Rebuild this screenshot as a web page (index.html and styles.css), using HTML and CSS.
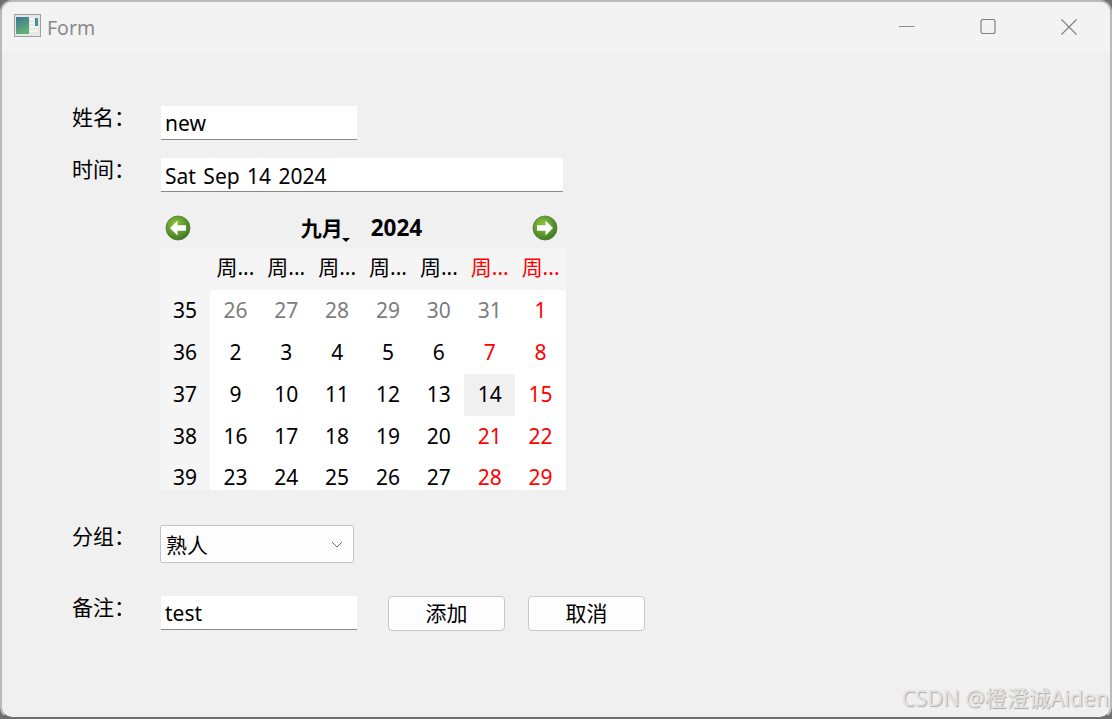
FILE: index.html
```html
<!DOCTYPE html>
<html lang="zh">
<head>
<meta charset="utf-8">
<title>Form</title>
<link rel="stylesheet" href="styles.css">
</head>
<body>
<div class="window">
  <header class="titlebar">
    <div class="title-left">
      <svg class="app-icon" width="27" height="23" viewBox="0 0 27 23">
        <defs><linearGradient id="pane" x1="0" y1="0" x2="0.4" y2="1"><stop offset="0" stop-color="#3a7596"/><stop offset="1" stop-color="#62b071"/></linearGradient></defs>
        <rect x="0.5" y="0.5" width="26" height="22" fill="#e6e8e8" stroke="#9aa0a4"/>
        <rect x="2" y="3" width="13" height="17" fill="url(#pane)"/>
        <rect x="21" y="4" width="3" height="8" fill="#478f94"/>
        <path d="M16 5h4M16 9h4M16 13h8M16 17h8" stroke="#f6f6f6" stroke-width="2"/>
      </svg>
      <span class="title-text">Form</span>
    </div>
    <div class="controls">
      <svg class="ctl" width="16" height="16" viewBox="0 0 16 16"><path d="M0 7.5h15.5" stroke="#8f8f8f" fill="none"/></svg>
      <svg class="ctl" width="16" height="16" viewBox="0 0 16 16"><rect x="1" y="0.5" width="14" height="14" rx="2" stroke="#7f7f7f" stroke-width="1.2" fill="none"/></svg>
      <svg class="ctl" width="16" height="16" viewBox="0 0 16 16"><path d="M0.5 0.5l15 15M15.5 0.5l-15 15" stroke="#808080" stroke-width="1.1" fill="none"/></svg>
    </div>
  </header>

  <main class="content">
    <div class="row row-name">
      <label class="label">姓名：</label>
      <div class="input input-short">new</div>
    </div>
    <div class="row row-time">
      <label class="label">时间：</label>
      <div class="input input-long">Sat Sep 14 2024</div>
    </div>

    <section class="calendar">
      <div class="cal-nav">
        <svg class="nav-icon" width="26" height="26" viewBox="0 0 26 26">
          <defs><radialGradient id="ball" cx="0.4" cy="0.35" r="0.75"><stop offset="0" stop-color="#8cc63f"/><stop offset="1" stop-color="#37701c"/></radialGradient></defs>
          <circle cx="13" cy="13" r="12" fill="url(#ball)" stroke="#54793f" stroke-width="0.8"/>
          <path d="M12.5 5.5L5 13l7.5 7.5v-4.7H21v-5.6h-8.5z" fill="#fff"/>
        </svg>
        <div class="cal-title"><span class="month">九月<i class="caret"></i></span><span class="year">2024</span></div>
        <svg class="nav-icon" width="26" height="26" viewBox="0 0 26 26">
          <circle cx="13" cy="13" r="12" fill="url(#ball)" stroke="#54793f" stroke-width="0.8"/>
          <path d="M13.5 5.5L21 13l-7.5 7.5v-4.7H5v-5.6h8.5z" fill="#fff"/>
        </svg>
      </div>
      <div class="cal-grid">
        <div class="hd"></div><div class="hd">周...</div><div class="hd">周...</div><div class="hd">周...</div><div class="hd">周...</div><div class="hd">周...</div><div class="hd red">周...</div><div class="hd red">周...</div>
        <div class="wk">35</div><div class="d mute">26</div><div class="d mute">27</div><div class="d mute">28</div><div class="d mute">29</div><div class="d mute">30</div><div class="d mute">31</div><div class="d red">1</div>
        <div class="wk">36</div><div class="d">2</div><div class="d">3</div><div class="d">4</div><div class="d">5</div><div class="d">6</div><div class="d red">7</div><div class="d red">8</div>
        <div class="wk">37</div><div class="d">9</div><div class="d">10</div><div class="d">11</div><div class="d">12</div><div class="d">13</div><div class="d sel">14</div><div class="d red">15</div>
        <div class="wk">38</div><div class="d">16</div><div class="d">17</div><div class="d">18</div><div class="d">19</div><div class="d">20</div><div class="d red">21</div><div class="d red">22</div>
        <div class="wk last">39</div><div class="d last">23</div><div class="d last">24</div><div class="d last">25</div><div class="d last">26</div><div class="d last">27</div><div class="d red last">28</div><div class="d red last">29</div>
      </div>
    </section>

    <div class="row row-group">
      <label class="label">分组：</label>
      <div class="combo">
        <span>熟人</span>
        <svg width="12" height="7" viewBox="0 0 12 7"><path d="M1 1l5 5 5-5" stroke="#6a6a6a" fill="none"/></svg>
      </div>
    </div>

    <div class="row row-note">
      <label class="label">备注：</label>
      <div class="input input-short">test</div>
      <button class="btn btn-add">添加</button>
      <button class="btn btn-cancel">取消</button>
    </div>
  </main>
  <div class="watermark">CSDN @橙澄诚Aiden</div>
</div>
</body>
</html>
```
FILE: styles.css
```css
* { box-sizing: border-box; }
html, body { margin: 0; padding: 0; background: #6f6f6f; }
body {
  width: 1112px;
  height: 719px;
  overflow: hidden;
  font-family: "Noto Sans", "Noto Sans CJK SC", sans-serif;
  color: #000;
}
.window {
  position: relative;
  width: 1112px;
  height: 719px;
  background: #f0f0f0;
  border: 2px solid #b9b9b9;
  border-bottom-color: #6e6e6e;
  border-radius: 12px;
  overflow: hidden;
}
.titlebar {
  height: 50px;
  background: #f3f3f3;
  display: flex;
  justify-content: space-between;
}
.title-left {
  display: flex;
  align-items: flex-start;
  padding: 12px 0 0 12px;
  gap: 6px;
}
.title-text {
  font-size: 19.5px;
  line-height: 28px;
  color: #8a8a8a;
}
.controls {
  display: flex;
  gap: 65px;
  padding: 17px 33px 0 0;
}
.content { padding: 54px 0 0 70px; }
.row { display: flex; align-items: flex-start; }
.label {
  width: 89px;
  flex: none;
  font-size: 21px;
  line-height: 22px;
}
.row-name { height: 34px; margin-bottom: 18px; }
.row-time { height: 34px; }
.input {
  height: 34px;
  background: #fff;
  border-bottom: 1px solid #8a8a8a;
  font-size: 21px;
  line-height: 35px;
  padding-left: 4px;
}
.input-short { width: 196px; }
.input-long {
  width: 402px;
  line-height: 37px;
  word-spacing: 2px;
}
.calendar { width: 406px; margin: 20px 0 0 88px; }
.cal-nav {
  height: 36px;
  padding: 3px 8px 0 5px;
  display: flex;
  justify-content: space-between;
  align-items: flex-start;
}
.cal-title {
  display: flex;
  gap: 28px;
  font-size: 21px;
  font-weight: 700;
  line-height: 32px;
  margin: -3px 0 0 0;
}
.year { font-size: 22.5px; }
.month { position: relative; }
.caret {
  position: absolute;
  right: -7px;
  bottom: 2px;
  border: 4px solid transparent;
  border-top: 4px solid #000;
  border-bottom: 0;
}
.cal-grid {
  display: grid;
  grid-template-columns: 50px repeat(7, 1fr);
  grid-template-rows: repeat(5, 42px) 32px;
  background: #fff;
  font-size: 21px;
  line-height: 24px;
}
.cal-grid > div {
  display: flex;
  align-items: center;
  justify-content: center;
  padding-bottom: 2px;
}
.cal-grid > .hd { padding-bottom: 4px; }
.cal-grid > .last {
  align-items: flex-start;
  padding: 7px 0 0;
}
.hd, .wk { background: #f5f5f5; }
.d.mute { color: #7d7d7d; }
.red { color: #f00; }
.d.sel { background: #f0f0f0; }
.row-group { margin-top: 35px; height: 38px; }
.combo {
  width: 194px;
  height: 38px;
  margin-left: -1px;
  background: #fdfdfd;
  border: 1px solid #c4c4c4;
  border-radius: 2px;
  font-size: 21px;
  padding: 0 10px 0 5px;
  display: flex;
  align-items: center;
  justify-content: space-between;
}
.row-note { margin-top: 33px; height: 35px; }
.btn {
  width: 117px;
  height: 35px;
  background: #fdfdfd;
  border: 1px solid #c8c8c8;
  border-radius: 4px;
  font: inherit;
  font-size: 21px;
  line-height: 28px;
  padding: 0 0 2px;
  color: #000;
}
.btn-add { margin-left: 31px; }
.btn-cancel { margin-left: 23px; }
.watermark {
  position: absolute;
  right: 1px;
  bottom: 4px;
  font-size: 21.8px;
  line-height: 30px;
  color: #e2e2e2;
  text-shadow: 1px 1px 1px #a8a8a8;
  white-space: nowrap;
}
```
